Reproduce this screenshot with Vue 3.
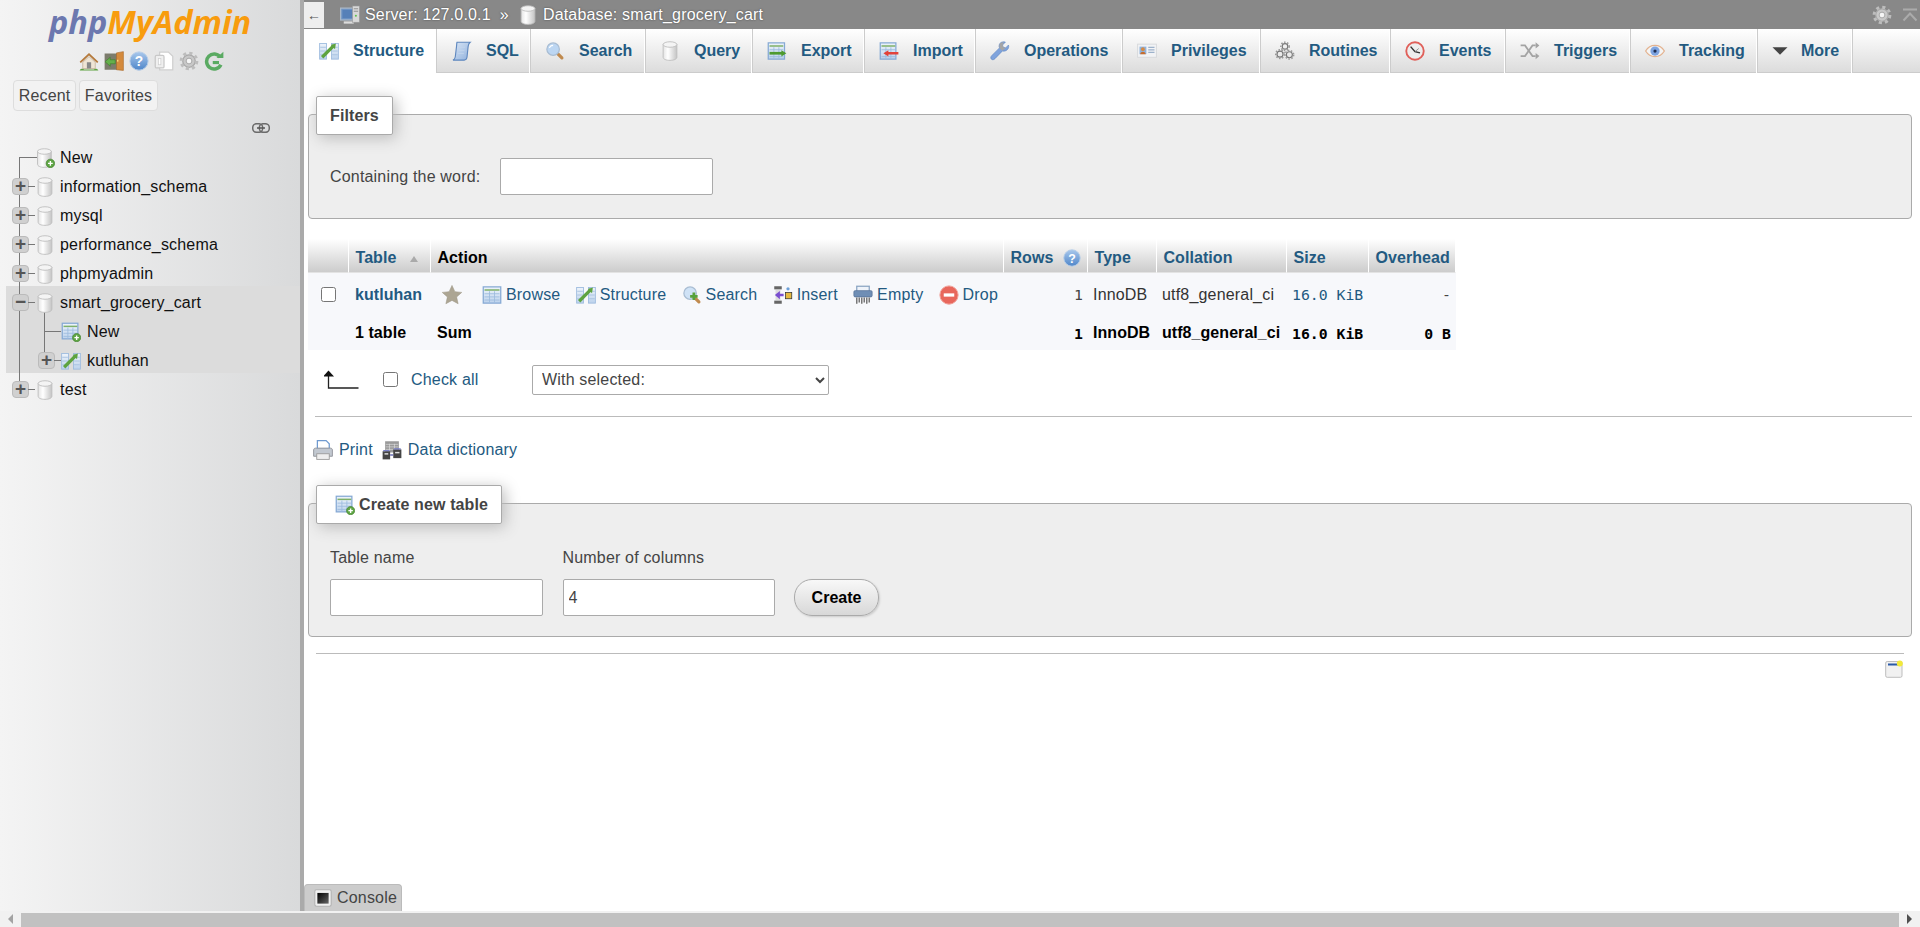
<script setup>
const navIcons = ['home', 'exit', 'help', 'docs', 'gear', 'reload']
const dbs = [
  { name: 'information_schema' },
  { name: 'mysql' },
  { name: 'performance_schema' },
  { name: 'phpmyadmin' },
  { name: 'smart_grocery_cart', open: true },
  { name: 'test' }
]
const tabs = [
  { label: 'Structure', icon: 'structure', active: true, w: 133 },
  { label: 'SQL', icon: 'sql', w: 93 },
  { label: 'Search', icon: 'search', w: 115 },
  { label: 'Query', icon: 'db', w: 107 },
  { label: 'Export', icon: 'export', w: 112 },
  { label: 'Import', icon: 'import', w: 111 },
  { label: 'Operations', icon: 'wrench', w: 147 },
  { label: 'Privileges', icon: 'card', w: 138 },
  { label: 'Routines', icon: 'routines', w: 130 },
  { label: 'Events', icon: 'clock', w: 115 },
  { label: 'Triggers', icon: 'shuffle', w: 125 },
  { label: 'Tracking', icon: 'eye', w: 127 },
  { label: 'More', icon: 'caret', w: 95, more: true }
]
const actions = [
  { label: 'Browse', icon: 'table' },
  { label: 'Structure', icon: 'structure' },
  { label: 'Search', icon: 'searchplus' },
  { label: 'Insert', icon: 'insert' },
  { label: 'Empty', icon: 'empty' },
  { label: 'Drop', icon: 'drop' }
]
</script>

<template>
  <div class="page">
    <svg class="defs" aria-hidden="true">
      <defs>
        <linearGradient id="gDb" x1="0" x2="1" y1="0" y2="0"><stop offset="0" stop-color="#e4e4e4"/><stop offset=".35" stop-color="#fff"/><stop offset="1" stop-color="#c4c4c4"/></linearGradient>
        <linearGradient id="gBlue" x1="0" x2="0" y1="0" y2="1"><stop offset="0" stop-color="#eef4fb"/><stop offset="1" stop-color="#bcd2ec"/></linearGradient>
        <linearGradient id="gScroll" x1="0" x2="1" y1="0" y2="1"><stop offset="0" stop-color="#dbe7f6"/><stop offset="1" stop-color="#8fb0dc"/></linearGradient>
        <linearGradient id="gHelp" x1="0" x2="0" y1="0" y2="1"><stop offset="0" stop-color="#a9c8ec"/><stop offset="1" stop-color="#4f86c9"/></linearGradient>
        <linearGradient id="gTerm" x1="0" x2="1" y1="0" y2="1"><stop offset="0" stop-color="#000"/><stop offset="1" stop-color="#666"/></linearGradient>
        <symbol id="i-db" viewBox="0 0 16 16"><path d="M2.500 2.500v10.500c0 1.500 2.400 2.500 5.500 2.500s5.500-1 5.500-2.500V2.500z" fill="url(#gDb)" stroke="#bdbdbd" stroke-width=".7"/><ellipse cx="8" cy="2.800" rx="5.500" ry="2.200" fill="#f4f4f4" stroke="#bdbdbd" stroke-width=".7"/></symbol>
        <symbol id="i-dbnew" viewBox="0 0 16 16"><path d="M2 2.500v10.500c0 1.500 2.400 2.500 5.500 2.500s5.500-1 5.500-2.500V2.500z" fill="url(#gDb)" stroke="#bdbdbd" stroke-width=".7"/><ellipse cx="7.500" cy="2.800" rx="5.500" ry="2.200" fill="#f4f4f4" stroke="#bdbdbd" stroke-width=".7"/><circle cx="12.300" cy="12.300" r="3.400" fill="#5fa544" stroke="#3f7f2c" stroke-width=".5"/><path d="M12.300 10.400v3.800M10.400 12.300h3.800" stroke="#fff" stroke-width="1.100"/></symbol>
        <symbol id="i-table" viewBox="0 0 16 16"><rect x="1" y="1.500" width="14" height="13" fill="url(#gBlue)" stroke="#86a9d4"/><path d="M2 4h12" stroke="#7fb069" stroke-width="1.200"/><path d="M2 7h12M2 9.500h12M2 12h12M6 5v9M10 5v9" stroke="#9dbbde" stroke-width=".7"/></symbol>
        <symbol id="i-tablenew" viewBox="0 0 16 16"><rect x="1" y="1" width="12.500" height="12.500" fill="url(#gBlue)" stroke="#86a9d4"/><path d="M2 3.500h11" stroke="#7fb069" stroke-width="1.200"/><path d="M2 6.500h11M2 9h11M2 11.500h11M5.500 4.500v9M9.500 4.500v9" stroke="#9dbbde" stroke-width=".7"/><circle cx="12.500" cy="12.500" r="3.300" fill="#5fa544" stroke="#3f7f2c" stroke-width=".5"/><path d="M12.500 10.700v3.600M10.700 12.500h3.600" stroke="#fff" stroke-width="1.100"/></symbol>
        <symbol id="i-structure" viewBox="0 0 16 16"><rect x=".5" y="2" width="5.500" height="12.500" fill="url(#gBlue)" stroke="#9dbbde" stroke-width=".7"/><rect x="10" y="2" width="5.500" height="12.500" fill="url(#gBlue)" stroke="#9dbbde" stroke-width=".7"/><path d="M1 5h4.500M1 8h4.500M1 11h4.500M10.500 5H15M10.500 8H15M10.500 11H15" stroke="#a5c0df" stroke-width=".7"/><path d="M2.500 13 12 3.500" stroke="#5ea33f" stroke-width="2.600"/><path d="M13.500 2 9.500 3.200 12.800 6.500z" fill="#5ea33f"/></symbol>
        <symbol id="i-sql" viewBox="0 0 16 16"><path d="M4 1h10.500c-1 .8-1.500 2-1.600 3.500L12 13c-.3 1.500-1 2.300-2.200 2.300H.8c1-.5 1.600-1.500 1.800-2.500L3.600 4.500C3.800 3 3.700 2 4 1z" fill="url(#gScroll)" stroke="#5f88bf" stroke-width=".9"/><path d="M5.500 5h5M5 7.500h5M4.500 10h5" stroke="#c3d6ec" stroke-width=".6"/></symbol>
        <symbol id="i-search" viewBox="0 0 16 16"><path d="M9.500 9.500l4 4" stroke="#c08a4e" stroke-width="2.600" stroke-linecap="round"/><circle cx="6.500" cy="6.500" r="5" fill="#bcd6f2" stroke="#a9bdd3"/><path d="M3.500 5.500a3.200 3.200 0 0 1 3-2" stroke="#fff" fill="none"/></symbol>
        <symbol id="i-searchplus" viewBox="0 0 16 16"><path d="M9.500 9.500l4 4" stroke="#c08a4e" stroke-width="2.600" stroke-linecap="round"/><circle cx="6.500" cy="6.500" r="5" fill="#cfe2f6" stroke="#a9bdd3"/><path d="M9.500 6v6M6.500 9h6" stroke="#58a23c" stroke-width="2.200"/></symbol>
        <symbol id="i-export" viewBox="0 0 16 16"><rect x="1" y="1.500" width="13" height="13" fill="url(#gBlue)" stroke="#86a9d4"/><path d="M2 4h11" stroke="#7fb069" stroke-width="1.200"/><path d="M2 7h11M2 12.500h11M5.500 5v9M9.500 5v9" stroke="#9dbbde" stroke-width=".7"/><path d="M2 9.800h10" stroke="#4e9a30" stroke-width="2.200"/><path d="M11.500 7.300 15.500 9.800 11.500 12.300z" fill="#4e9a30"/></symbol>
        <symbol id="i-import" viewBox="0 0 16 16"><rect x="1" y="1.500" width="12.500" height="13" fill="url(#gBlue)" stroke="#86a9d4"/><path d="M2 4h11" stroke="#7fb069" stroke-width="1.200"/><path d="M2 7h11M2 12.500h11M5.500 5v9M9.500 5v9" stroke="#9dbbde" stroke-width=".7"/><path d="M7 9.800h8.500" stroke="#e2423a" stroke-width="2"/><path d="M7.500 7.300 3.500 9.800 7.500 12.300z" fill="#e2423a"/></symbol>
        <symbol id="i-wrench" viewBox="0 0 16 16"><path d="M14.800 3.200 12.500 5.500 10.600 5 10 3.200l2.300-2.300C10.300.2 8 1 7.400 3c-.3 1-.2 1.800.2 2.500L1.500 11.600c-1 1-1.200 2-.4 2.900.9.800 1.900.6 2.900-.4l6-6.200c2.500 1 5.800-1.600 4.800-4.700z" fill="#7fa3dc" stroke="#5f86c2" stroke-width=".5"/><path d="M7.500 3c.5-1.400 2-2 3.500-1.900L10 3.200l.6 1.800 1.900.5-2.800 2.200L7.600 5.500z" fill="#a5a5a5"/></symbol>
        <symbol id="i-card" viewBox="0 0 16 16"><rect x=".5" y="2.500" width="15" height="10.500" fill="#f2f3f5" stroke="#d5d7da" stroke-width=".7"/><rect x="2" y="4.500" width="5.500" height="6" fill="#8fb3dc"/><circle cx="4.700" cy="6.500" r="1.500" fill="#d58a45"/><path d="M2.500 10.500c.3-1.500 1.200-2 2.200-2s2 .5 2.300 2z" fill="#c66d2f"/><path d="M9 5h5M9 7h5M9 9h5" stroke="#9db2cb"/></symbol>
        <symbol id="i-routines" viewBox="0 0 16 16"><g fill="none" stroke="#777" stroke-width=".9"><circle cx="8" cy="4.300" r="2.200"/><circle cx="4" cy="10.500" r="2.400"/><circle cx="11.500" cy="11" r="2.400"/></g><g fill="none" stroke="#999" stroke-width="1.300" stroke-dasharray="1.200 1.200"><circle cx="8" cy="4.300" r="3.300"/><circle cx="4" cy="10.500" r="3.400"/><circle cx="11.500" cy="11" r="3.400"/></g></symbol>
        <symbol id="i-clock" viewBox="0 0 16 16"><circle cx="8" cy="8" r="7" fill="#eee" stroke="#e0605a" stroke-width="1.500"/><path d="M4.500 4.500 8 8.500l4 1" fill="none" stroke="#333" stroke-width="1.200"/><path d="M8 8.500 11 6" stroke="#888" stroke-width=".7"/></symbol>
        <symbol id="i-shuffle" viewBox="0 0 16 16"><g fill="none" stroke="#a3a3a3" stroke-width="1.400"><path d="M.5 3.500h3.500l6 8.500h2.500"/><path d="M.5 12h3.500l6-8.500h2.500"/></g><path d="M12.500 1v5l3-2.500zM12.500 9.500v5l3-2.500z" fill="#a3a3a3"/></symbol>
        <symbol id="i-eye" viewBox="0 0 16 16"><path d="M.5 8c2-3.300 4.500-4.500 7.500-4.500s5.500 1.200 7.500 4.500c-2 3.300-4.500 4.500-7.500 4.500S2.500 11.300.5 8z" fill="#f4f4f4" stroke="#e3b28f" stroke-width="1"/><circle cx="8" cy="8" r="3.700" fill="#7da3e0"/><circle cx="8" cy="8" r="1.300" fill="#1b2c52"/></symbol>
        <symbol id="i-caret" viewBox="0 0 16 16"><path d="M2 5h12L8 11z" fill="#444"/></symbol>
        <symbol id="i-home" viewBox="0 0 16 16"><path d="M8 1.500.5 8.500l1 1L8 3.500l6.500 6 1-1z" fill="#b57a3c"/><path d="M3 9v5h10V9L8 4.500z" fill="#efe5d5" stroke="#b9a283" stroke-width=".5"/><rect x="6.300" y="9" width="3.400" height="5" fill="#888"/><path d="M.5 15.500c1-1.500 3-1.500 3.500-.8h8c.5-.7 2.500-.7 3.500.8z" fill="#5da23f"/></symbol>
        <symbol id="i-exit" viewBox="0 0 16 16"><rect x=".5" y="2" width="10" height="13" fill="#7c7c6c"/><path d="M10 1.500 15.500 .5v15l-5.500-.5z" fill="#d48a3c" stroke="#a8682a" stroke-width=".5"/><rect x="10.500" y="7" width="1" height="1.500" fill="#ffe38a"/><path d="M.8 8.500 5 5v2h4v3.200H5v2z" fill="#65b04b" stroke="#3d7f2a" stroke-width=".5"/></symbol>
        <symbol id="i-help" viewBox="0 0 16 16"><circle cx="8" cy="8" r="7.300" fill="url(#gHelp)" stroke="#b6cde8" stroke-width=".8"/><text x="8" y="12" text-anchor="middle" font-family="Liberation Sans, sans-serif" font-weight="700" font-size="11" fill="#fff">?</text></symbol>
        <symbol id="i-docs" viewBox="0 0 16 16"><path d="M4.500 .8h7l3.500 3.500V15H4.500z" fill="#fff" stroke="#cfcfcf"/><rect x="1" y="3.500" width="7" height="10" rx="1" fill="#efefef" stroke="#c8c8c8"/><rect x="3.500" y="6" width="2" height="5" fill="#fff" stroke="#cfcfcf" stroke-width=".6"/></symbol>
        <symbol id="i-gear" viewBox="0 0 16 16"><circle cx="8" cy="8" r="5" fill="#c8c8c8" stroke="#a8a8a8"/><circle cx="8" cy="8" r="6.300" fill="none" stroke="#bdbdbd" stroke-width="2.400" stroke-dasharray="2.500 2.450"/><circle cx="8" cy="8" r="2.300" fill="#f6f6f6" stroke="#a0a0a0" stroke-width=".7"/></symbol>
        <symbol id="i-reload" viewBox="0 0 16 16"><path d="M13 5A6 6 0 1 0 13.500 11" fill="none" stroke="#5aaa62" stroke-width="2.800"/><path d="M10 5.500h5.500v-5z" fill="#5aaa62"/><path d="M7 8h5v2.500H7z" fill="#5aaa62"/></symbol>
        <symbol id="i-link" viewBox="0 0 18 10"><rect x=".7" y=".7" width="10" height="8.600" rx="4" fill="none" stroke="#6b6b6b" stroke-width="1.500"/><rect x="7.300" y=".7" width="10" height="8.600" rx="4" fill="none" stroke="#6b6b6b" stroke-width="1.500"/><path d="M5 5h8" stroke="#555" stroke-width="1.500"/></symbol>
        <symbol id="i-star" viewBox="0 0 16 16"><path d="M8 .3l2.300 5 5.500.6-4.100 3.700 1.200 5.400L8 12.300l-4.900 2.700 1.200-5.400L.2 5.900l5.500-.6z" fill="#aca593" stroke="#9a9483" stroke-width=".4"/></symbol>
        <symbol id="i-insert" viewBox="0 0 16 16"><rect x="1" y="1" width="6" height="2.500" fill="#666"/><rect x="1" y="12.500" width="6" height="2.500" fill="#666"/><rect x="2" y="4" width="4" height="8" fill="#dcdcdc"/><path d="M8.500 8H3" stroke="#7a4fd0" stroke-width="2"/><path d="M5.500 4.700 1.500 8l4 3.300z" fill="#7a4fd0"/><circle cx="12" cy="3" r="1.300" fill="#6da0d8"/><rect x="10" y="6" width="5" height="5" fill="#e6b93f" stroke="#333" stroke-width=".6"/></symbol>
        <symbol id="i-empty" viewBox="0 0 16 16"><rect x="3" y="1" width="10" height="5" fill="#eef3fa" stroke="#8aa4c2"/><rect x=".7" y="4.500" width="14.600" height="5" rx="1" fill="#6f8eb5" stroke="#557298" stroke-width=".6"/><path d="M3 10v5M5 10v4M7 10v5M9 10v4M11 10v5M13 10v4" stroke="#777" stroke-width="1.200"/></symbol>
        <symbol id="i-drop" viewBox="0 0 16 16"><circle cx="8" cy="8" r="7.300" fill="#e8675c" stroke="#f0a29a" stroke-width=".8"/><rect x="3.800" y="6.700" width="8.400" height="2.600" fill="#fff"/></symbol>
        <symbol id="i-print" viewBox="0 0 16 16"><path d="M3.500 .5h7l2.500 2.500V7H3.500z" fill="#fff" stroke="#6f9ad0"/><path d="M.5 8c0-1.100.9-1.500 1.500-1.500h12c.6 0 1.500.4 1.500 1.500v5h-15z" fill="#c2c8d0" stroke="#8b8f96" stroke-width=".7"/><rect x="3" y="11" width="10" height="4.500" fill="#eee" stroke="#999" stroke-width=".7"/></symbol>
        <symbol id="i-dict" viewBox="0 0 16 16"><rect x="2.500" y="1" width="11" height="9" fill="#9a9a9a"/><path d="M3 3.500h10M3 5.500h10M3 7.500h10M6 3v6M10 3v6" stroke="#ddd" stroke-width=".5"/><rect x=".5" y="9" width="6" height="6.500" fill="#444"/><rect x="9" y="7.500" width="6.500" height="7" fill="#444"/><rect x="2" y="10.500" width="3" height="1.200" fill="#ddd"/><rect x="10.500" y="9.500" width="3.500" height="1.200" fill="#ddd"/><path d="M6.500 12h2.500" stroke="#6a6fb5" stroke-width="1.200"/><path d="M1 8.500h5M9.500 7h5.500" stroke="#7a80c8"/></symbol>
        <symbol id="i-console" viewBox="0 0 16 16"><rect x=".7" y=".7" width="14.600" height="14.600" rx="1.500" fill="#f0f0f0" stroke="#b3b3b3"/><rect x="3" y="3.500" width="10" height="9.500" fill="url(#gTerm)"/></symbol>
        <symbol id="i-note" viewBox="0 0 18 18"><rect x=".7" y="1.500" width="16.300" height="15.800" rx="1.500" fill="#f1f1f1" stroke="#bdbdbd"/><rect x="3" y="3.500" width="10" height="2" fill="#2a5aa8"/><circle cx="14.800" cy="3.400" r="3" fill="#f2e93a"/></symbol>
        <symbol id="i-server" viewBox="0 0 16 16"><rect x=".5" y="2.500" width="11.500" height="9.500" fill="#6d93c4" stroke="#aab8c8"/><rect x="2" y="4" width="8.500" height="6.500" fill="#5680b8"/><path d="M3 14h8" stroke="#ddd" stroke-width="1.800"/><rect x="10" y=".8" width="5.500" height="13" fill="#d8d8d8" stroke="#999" stroke-width=".5"/><path d="M11 3h3.500M11 5h3.500" stroke="#888" stroke-width=".7"/><circle cx="12.700" cy="8.500" r=".8" fill="#5ac24a"/></symbol>
        <symbol id="i-arrowup" viewBox="0 0 36 20"><path d="M4.500 3.500v14.500h30" fill="none" stroke="#222" stroke-width="1.300"/><path d="M4.500 .5 10 6.500H-1z" fill="#111"/></symbol>
      </defs>
    </svg>

    <aside class="sidebar">
      <div class="logo"><span class="php">php</span><span class="my">MyAdmin</span></div>
      <div class="nav-icons">
        <svg v-for="n in navIcons" :key="n" class="nav-ic"><use :href="'#i-' + n"/></svg>
      </div>
      <div class="side-tabs">
        <button class="side-tab">Recent</button>
        <button class="side-tab">Favorites</button>
      </div>
      <div class="link-row"><svg class="link-ic"><use href="#i-link"/></svg></div>
      <ul class="tree">
        <li class="row first">
          <span class="exp none"></span>
          <svg class="db-ic"><use href="#i-dbnew"/></svg>
          <span class="node">New</span>
        </li>
        <template v-for="(d, i) in dbs" :key="d.name">
          <li v-if="!d.open" class="row" :class="{ last: i === dbs.length - 1 }">
            <span class="exp">+</span>
            <svg class="db-ic"><use href="#i-db"/></svg>
            <span class="node">{{ d.name }}</span>
          </li>
          <li v-else class="group">
            <div class="row">
              <span class="exp">−</span>
              <svg class="db-ic"><use href="#i-db"/></svg>
              <span class="node">{{ d.name }}</span>
            </div>
            <div class="row sub first-sub">
              <span class="exp none"></span>
              <svg class="tb-ic"><use href="#i-tablenew"/></svg>
              <span class="node">New</span>
            </div>
            <div class="row sub last-sub">
              <span class="exp">+</span>
              <svg class="tb-ic"><use href="#i-structure"/></svg>
              <span class="node">kutluhan</span>
            </div>
          </li>
        </template>
      </ul>
    </aside>

    <main class="main">
      <header class="topbar">
        <span class="back">←</span>
        <svg class="ic server"><use href="#i-server"/></svg>
        <span class="crumb">Server: 127.0.0.1</span>
        <span class="sep">»</span>
        <svg class="ic crumb-db"><use href="#i-db"/></svg>
        <span class="crumb">Database: smart_grocery_cart</span>
        <span class="top-right">
          <svg class="top-gear"><use href="#i-gear"/></svg>
          <svg class="top-collapse" viewBox="0 0 16 14"><path d="M1 1.500h14M1.500 12.500 8 5.500l6.500 7" fill="none" stroke="#ababab" stroke-width="2"/></svg>
        </span>
      </header>

      <nav class="tabs">
        <a v-for="t in tabs" :key="t.label" class="tab" :class="{ active: t.active, more: t.more }" :style="{ width: t.w + 'px' }">
          <svg class="ic"><use :href="'#i-' + t.icon"/></svg>
          <span>{{ t.label }}</span>
        </a>
      </nav>

      <section class="content">
        <div class="fieldset filters">
          <div class="legend">Filters</div>
          <div class="filter-line">
            <label class="lbl">Containing the word:</label>
            <input class="text wide" type="text" />
          </div>
        </div>

        <table class="grid">
          <colgroup>
            <col class="c0" /><col class="c1" /><col class="c2" /><col class="c3" />
            <col class="c4" /><col class="c5" /><col class="c6" /><col class="c7" />
          </colgroup>
          <thead>
            <tr>
              <th></th>
              <th><a>Table</a><i class="sort"></i></th>
              <th class="plain">Action</th>
              <th><a>Rows</a><svg class="help"><use href="#i-help"/></svg></th>
              <th><a>Type</a></th>
              <th><a>Collation</a></th>
              <th><a>Size</a></th>
              <th><a>Overhead</a></th>
            </tr>
          </thead>
          <tbody>
            <tr>
              <td class="ck"><input type="checkbox" class="box" /></td>
              <td class="name">kutluhan</td>
              <td class="acts">
                <svg class="ic star"><use href="#i-star"/></svg>
                <a v-for="a in actions" :key="a.label" class="act">
                  <svg class="ic"><use :href="'#i-' + a.icon"/></svg>{{ a.label }}
                </a>
              </td>
              <td class="mono right">1</td>
              <td class="dark">InnoDB</td>
              <td class="dark">utf8_general_ci</td>
              <td class="mono size">16.0 KiB</td>
              <td class="mono right">-</td>
            </tr>
            <tr class="sum">
              <td></td>
              <td>1 table</td>
              <td>Sum</td>
              <td class="mono right">1</td>
              <td>InnoDB</td>
              <td>utf8_general_ci</td>
              <td class="mono">16.0 KiB</td>
              <td class="mono right">0 B</td>
            </tr>
          </tbody>
        </table>

        <div class="bulk">
          <svg class="arrow"><use href="#i-arrowup"/></svg>
          <input type="checkbox" class="box bulk-box" />
          <a class="check-all">Check all</a>
          <select class="sel"><option>With selected:</option></select>
        </div>

        <hr class="rule first-rule" />

        <div class="print-row">
          <a class="act"><svg class="ic"><use href="#i-print"/></svg>Print</a>
          <a class="act"><svg class="ic"><use href="#i-dict"/></svg>Data dictionary</a>
        </div>

        <div class="fieldset create">
          <div class="legend new-legend">
            <svg class="ic"><use href="#i-tablenew"/></svg>Create new table
          </div>
          <div class="create-line">
            <div class="col">
              <label class="lbl">Table name</label>
              <input class="text" type="text" />
            </div>
            <div class="col col2">
              <label class="lbl">Number of columns</label>
              <input class="text" type="text" value="4" />
            </div>
            <button class="go">Create</button>
          </div>
        </div>

        <hr class="rule second-rule" />
        <div class="note-row"><svg class="note"><use href="#i-note"/></svg></div>
      </section>

      <div class="console"><svg class="con-ic"><use href="#i-console"/></svg>Console</div>
    </main>

    <div class="hscroll">
      <span class="tri left"></span>
      <span class="thumb"></span>
      <span class="tri right"></span>
    </div>
  </div>
</template>

<style>
html, body { margin: 0; overflow: hidden; }
</style>

<style scoped>
.page {
  width: 1920px;
  height: 927px;
  display: grid;
  grid-template-columns: 300px 1fr;
  grid-template-rows: 911px 16px;
  font-family: "Liberation Sans", Arial, sans-serif;
  font-size: 16px;
  letter-spacing: .18px;
  color: #444;
  background: #fff;
  overflow: hidden;
}
.defs { position: absolute; width: 0; height: 0; }
a { color: #235a81; }
.ic { width: 20px; height: 20px; flex: none; }

/* sidebar */
.sidebar {
  background: linear-gradient(to right, #f4f4f4, #d9dadb);
  display: flex;
  flex-direction: column;
  overflow: hidden;
}
.logo {
  height: 40px;
  margin: 3px 0 0 49px;
  font-family: "Open Sans", sans-serif;
  font-weight: 700;
  font-style: italic;
  font-size: 32.500px;
  line-height: 38px;
  letter-spacing: 0;
  white-space: nowrap;
}
.php { color: #6c78af; }
.my { color: #f89c0e; }
.nav-icons { display: flex; gap: 5px; margin: 8px 0 0 79px; height: 20px; }
.nav-ic { width: 20px; height: 20px; }
.side-tabs { display: flex; gap: 3px; margin: 9px 0 0 13px; }
.side-tab {
  height: 31px;
  padding: 0 4.700px;
  border: 1px solid #ddd;
  border-radius: 4px;
  background: #f2f2f2;
  font: 16px "Liberation Sans", Arial, sans-serif;
  letter-spacing: .18px;
  color: #444;
}
.link-row { display: flex; justify-content: flex-end; padding-right: 30px; margin-top: 12px; height: 9px; }
.link-ic { width: 18px; height: 10px; }

.tree { list-style: none; margin: 11px 0 0; padding: 0 0 0 6px; }
.row {
  position: relative;
  display: flex;
  align-items: center;
  height: 29px;
  padding-left: 6px;
  color: #111;
}
.row::before {
  content: "";
  position: absolute;
  left: 13px;
  top: 0;
  bottom: 0;
  border-left: 1px solid #777;
}
.row.first::before { top: 14px; }
.row.last::before { top: -2px; bottom: 14px; }
.row.first::after, .row.first-sub::after {
  content: "";
  position: absolute;
  border-top: 1px solid #777;
}
.row.first::after { left: 13px; top: 14px; width: 18px; }
.group {
  position: relative;
  box-sizing: border-box;
  height: 87px;
  margin: -2px 0 2px;
  padding-top: 2px;
  background: #dcdcdc;
}
.group > .row:first-child::before { top: -2px; }
.group::after {
  content: "";
  position: absolute;
  left: 38px;
  top: 22px;
  height: 44px;
  border-left: 1px solid #777;
}
.row.sub { padding-left: 32px; }
.row.first-sub::after { left: 38px; top: 14px; width: 17px; }
.exp {
  position: relative;
  z-index: 1;
  flex: none;
  width: 17px;
  height: 17px;
  box-sizing: border-box;
  margin-right: 6px;
  border: 1px solid #bbb;
  border-radius: 4px;
  background: #d0d0d0;
  color: #555;
  font: 700 19px/14px "Liberation Sans", sans-serif;
  letter-spacing: 0;
  text-align: center;
}
.exp::after {
  content: "";
  position: absolute;
  left: 100%;
  top: 7px;
  width: 7px;
  border-top: 1px solid #777;
}
.exp.none { visibility: hidden; }
.db-ic { width: 20px; height: 20px; flex: none; margin-right: 5px; position: relative; z-index: 1; }
.tb-ic { width: 20px; height: 20px; flex: none; margin-right: 6px; position: relative; z-index: 1; }
.first-sub .exp { width: 23px; margin-right: 0; }

/* main */
.main {
  position: relative;
  border-left: 4px solid #aaa;
  display: flex;
  flex-direction: column;
  min-width: 0;
}
.topbar {
  height: 29px;
  flex: none;
  background: #888;
  display: flex;
  align-items: center;
  color: #fff;
  text-shadow: 0 0 2px #444;
}
.back {
  width: 20px;
  height: 26px;
  background: #eee;
  color: #555;
  text-shadow: none;
  text-align: center;
  line-height: 26px;
  font-size: 14px;
  margin-right: 16px;
}
.server { margin-right: 5px; }
.crumb { white-space: nowrap; }
.sep { margin: 0 9px 0 9px; }
.crumb-db { width: 20px; height: 20px; margin-right: 5px; }
.top-right { margin-left: auto; display: flex; align-items: center; gap: 10px; padding-right: 2px; }
.top-gear { width: 20px; height: 20px; }
.top-collapse { width: 16px; height: 14px; }

.tabs {
  height: 44px;
  flex: none;
  display: flex;
  box-sizing: border-box;
  background: linear-gradient(#fff, #dcdcdc);
  border-bottom: 1px solid #ccc;
}
.tab {
  box-sizing: border-box;
  display: flex;
  align-items: center;
  gap: 14px;
  padding-left: 15px;
  margin-bottom: -1px;
  border-right: 1px solid #fff;
  box-shadow: 1px 0 0 #ccc;
  font-weight: 700;
  letter-spacing: 0;
  white-space: nowrap;
  color: #235a81;
}
.tab.more { gap: 11px; padding-left: 13px; }
.tab.active { background: #fff; border-right: 1px solid #ccc; box-shadow: none; }

.content { flex: 1; min-height: 0; display: flex; flex-direction: column; padding-left: 4px; }
.fieldset {
  box-sizing: border-box;
  flex: none;
  width: 1604px;
  background: #eee;
  border: 1px solid #aaa;
  border-radius: 4px;
}
.filters { height: 105px; margin-top: 41px; }
.legend {
  width: fit-content;
  box-sizing: border-box;
  display: flex;
  align-items: center;
  height: 39px;
  margin: -19px 0 0 7px;
  padding: 0 13px;
  background: #fff;
  border: 1px solid #aaa;
  border-radius: 2px;
  box-shadow: 3px 3px 15px #bbb;
  color: #444;
  font-weight: 700;
  letter-spacing: .12px;
}
.filter-line { display: flex; align-items: center; margin: 23px 0 0 21px; gap: 20px; }
.lbl { color: #444; white-space: nowrap; }
.text {
  box-sizing: border-box;
  width: 212.500px;
  height: 37px;
  padding: 0 5px;
  background: #fff;
  border: 1px solid #aaa;
  border-radius: 2px;
  color: #444;
  font: 16px "Liberation Sans", Arial, sans-serif;
}
.grid {
  flex: none;
  width: 1148px;
  margin-top: 20px;
  border-collapse: separate;
  border-spacing: 0;
  table-layout: fixed;
  background: #f7f8fb;
}
.c0 { width: 41px; } .c1 { width: 82px; } .c2 { width: 573px; } .c3 { width: 84px; }
.c4 { width: 69px; } .c5 { width: 130px; } .c6 { width: 82px; } .c7 { width: 87px; }
th {
  box-sizing: border-box;
  height: 34px;
  padding: 4px 0 0 6.500px;
  text-align: left;
  white-space: nowrap;
  background: linear-gradient(#fff, #ccc);
  border-right: 1px solid #fff;
  border-bottom: 1px solid #e3e3e3;
  color: #000;
  letter-spacing: .06px;
}
.sort {
  display: inline-block;
  margin: 0 0 1px 14px;
  border-left: 4.500px solid transparent;
  border-right: 4.500px solid transparent;
  border-bottom: 6px solid #aaa;
}
.help { width: 18px; height: 18px; margin-left: 10px; vertical-align: -4px; }
td {
  box-sizing: border-box;
  padding: 5px 5px 0;
  white-space: nowrap;
  color: #444;
}
tbody tr { height: 38.500px; }
.ck { padding-left: 13px; }
.box { width: 15px; height: 15px; margin: 0; display: block; }
.name { font-weight: 700; color: #235a81; padding-left: 6px; letter-spacing: .06px; }
.acts { padding-left: 11px; }
.acts .star { margin-right: 20px; vertical-align: middle; }
.act { display: inline-flex; align-items: center; gap: 4px; margin-right: 15.300px; vertical-align: middle; }
.acts .act:last-child { margin-right: 0; }
.dark { color: #333; }
.mono { font-family: "DejaVu Sans Mono", monospace; font-size: 14.800px; letter-spacing: 0; }
.right { text-align: right; }
.size { color: #235a81; }
.sum td { font-weight: 700; color: #000; padding-left: 5px; letter-spacing: .06px; }
.sum td.mono { letter-spacing: 0; }
.sum td:nth-child(2) { padding-left: 6px; }
.sum td:nth-child(3) { padding-left: 6px; }
.bulk { display: flex; align-items: center; height: 29px; margin-top: 15px; padding-left: 16px; flex: none; }
.arrow { width: 36px; height: 20px; flex: none; overflow: visible; }
.bulk-box { margin-left: 23px; }
.check-all { margin-left: 13px; width: 121px; }
.sel {
  box-sizing: border-box;
  width: 297px;
  height: 30px;
  padding-left: 5px;
  background: #fff;
  border: 1px solid #aaa;
  border-radius: 2px;
  color: #444;
  font: 16px "Liberation Sans", Arial, sans-serif;
  letter-spacing: .18px;
}
.rule { border: 0; border-top: 1px solid #bbb; margin: 0; flex: none; }
.first-rule { width: 1597px; margin: 22px 0 0 7px; }
.print-row { display: flex; align-items: center; gap: 9px; height: 20px; margin: 23px 0 0 5px; flex: none; }
.print-row .act { margin-right: 0; gap: 6px; }
.create { height: 134px; margin-top: 43px; }
.new-legend { gap: 4px; padding: 0 13px 0 18px; margin-left: 7px; }
.create-line { display: flex; align-items: flex-end; margin: 25px 0 0 21px; }
.col { display: flex; flex-direction: column; gap: 12px; }
.col .lbl { line-height: 18px; }
.col2 { margin-left: 20px; }
.go {
  box-sizing: border-box;
  width: 85px;
  height: 37px;
  margin-left: 19px;
  border: 1px solid #aaa;
  border-radius: 18px;
  background: linear-gradient(#f8f8f8, #d8d8d8);
  box-shadow: 1px 1px 2px #ccc;
  color: #000;
  font: 700 16px "Liberation Sans", Arial, sans-serif;
}
.second-rule { width: 1588px; margin: 16px 0 0 8px; }
.note-row { display: flex; justify-content: flex-end; padding-right: 17px; margin-top: 6px; flex: none; }
.note { width: 18px; height: 18px; }

.console {
  box-sizing: border-box;
  position: absolute;
  left: 0;
  bottom: 0;
  display: flex;
  align-items: center;
  gap: 5px;
  width: 98px;
  height: 27px;
  padding-left: 9px;
  background: #ccc;
  border-radius: 4px 4px 0 0;
  border: 1px solid #bbb;
  border-bottom: 0;
  color: #444;
}
.con-ic { width: 18px; height: 18px; }

.hscroll {
  grid-column: 1 / -1;
  display: flex;
  align-items: center;
  background: #f1f1f1;
}
.thumb { flex: 1; height: 14px; margin-top: 2px; background: #c1c1c1; }
.tri { width: 21px; flex: none; display: flex; justify-content: center; }
.tri::before { content: ""; border-top: 5px solid transparent; border-bottom: 5px solid transparent; }
.tri.left::before { border-right: 5px solid #a3a3a3; }
.tri.right::before { border-left: 5px solid #505050; }
</style>
